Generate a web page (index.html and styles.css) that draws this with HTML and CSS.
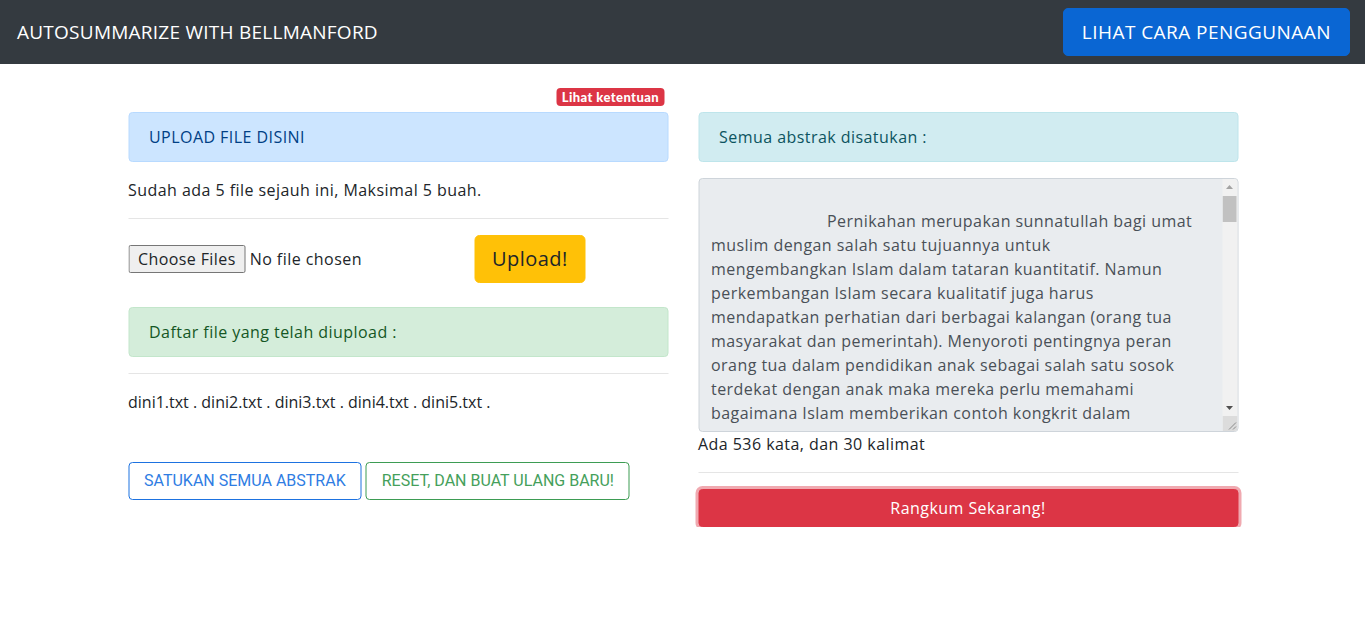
FILE: index.html
```html
<!DOCTYPE html>
<html lang="id">
<head>
<meta charset="utf-8">
<title>Autosummarize with Bellmanford</title>
<link rel="stylesheet" href="styles.css">
</head>
<body>
<nav class="navbar">
  <span class="brand">AUTOSUMMARIZE WITH BELLMANFORD</span>
  <button class="btn-guide" type="button">LIHAT CARA PENGGUNAAN</button>
</nav>

<main class="container">
  <section class="col">
    <div class="badge-row"><span class="badge">Lihat ketentuan</span></div>
    <div class="alert alert-primary">UPLOAD FILE DISINI</div>
    <p class="text">Sudah ada 5 file sejauh ini, Maksimal 5 buah.</p>
    <hr class="rule">
    <form class="upload-row">
      <input class="file-input" type="file" multiple>
      <button class="btn-upload" type="button">Upload!</button>
    </form>
    <div class="alert alert-success spaced">Daftar file yang telah diupload :</div>
    <hr class="rule">
    <p class="text files">dini1.txt . dini2.txt . dini3.txt . dini4.txt . dini5.txt .</p>
    <div class="actions">
      <button class="btn-outline btn-outline-primary" type="button">SATUKAN SEMUA ABSTRAK</button>
      <button class="btn-outline btn-outline-success" type="button">RESET, DAN BUAT ULANG BARU!</button>
    </div>
  </section>

  <section class="col col-right">
    <div class="alert alert-info">Semua abstrak disatukan :</div>
    <div class="textarea-wrap">
    <textarea class="abstract" readonly>

	Pernikahan merupakan sunnatullah bagi umat
muslim dengan salah satu tujuannya untuk
mengembangkan Islam dalam tataran kuantitatif. Namun
perkembangan Islam secara kualitatif juga harus
mendapatkan perhatian dari berbagai kalangan (orang tua
masyarakat dan pemerintah). Menyoroti pentingnya peran
orang tua dalam pendidikan anak sebagai salah satu sosok
terdekat dengan anak maka mereka perlu memahami
bagaimana Islam memberikan contoh kongkrit dalam
pendidikan anak melalui kisah-kisah dalam Al-Qur'an.
Penelitian ini bertujuan untuk mengetahui nilai-nilai
pendidikan anak yang terkandung dalam kisah Luqman
dan relevansinya dengan pendidikan anak pada masa
sekarang. Jenis penelitian ini adalah penelitian
kepustakaan (library research) dengan pendekatan
kualitatif. Teknik pengumpulan data dilakukan dengan
dokumentasi, sedangkan analisis data menggunakan
metode analisis isi (content analysis). Hasil
penelitian menunjukkan bahwa nilai-nilai pendidikan
anak meliputi pendidikan akidah, pendidikan ibadah,
pendidikan akhlak, dan pendidikan sosial
kemasyarakatan. Nilai-nilai tersebut masih sangat
relevan untuk diterapkan dalam keluarga muslim saat
ini. Pendidikan merupakan usaha sadar dan terencana
untuk mewujudkan suasana belajar dan proses
pembelajaran agar peserta didik secara aktif
mengembangkan potensi dirinya. Guru sebagai pendidik
profesional memiliki tugas utama mendidik, mengajar,
membimbing, mengarahkan, melatih, menilai, dan
mengevaluasi peserta didik.</textarea>
      <div class="fake-scroll" aria-hidden="true">
        <span class="sb-btn"><svg width="15" height="15" viewBox="0 0 15 15"><path d="M3.5 10 L7 6 L10.5 10 Z" fill="#a3a3a3"/></svg></span>
        <span class="sb-track"><span class="sb-thumb"></span></span>
        <span class="sb-btn"><svg width="15" height="15" viewBox="0 0 15 15"><path d="M3.5 5 L7 9 L10.5 5 Z" fill="#505050"/></svg></span>
        <span class="sb-corner"><svg width="15" height="15" viewBox="0 0 15 15"><path d="M13.5 6.5 L6.5 13.5 M13.5 10.5 L10.5 13.5" stroke="#8a8a8a" stroke-width="1"/></svg></span>
      </div>
    </div>
    <p class="count">Ada 536 kata, dan 30 kalimat</p>
    <hr class="rule">
    <button class="btn-danger" type="button">Rangkum Sekarang!</button>
  </section>
</main>
</body>
</html>
```

FILE: styles.css
```css
* {
  box-sizing: border-box;
}

html, body {
  margin: 0;
  background: #fff;
}

body {
  font-family: "Open Sans", "Noto Sans", sans-serif;
  font-size: 16px;
  line-height: 24px;
  letter-spacing: 0.45px;
  color: #212529;
}

.navbar {
  height: 64px;
  background: #343a40;
  display: flex;
  align-items: center;
  justify-content: space-between;
  padding: 0 15px 0 17px;
}

.brand {
  color: #fff;
  font-size: 19px;
  line-height: 30px;
  letter-spacing: 0.25px;
}

.btn-guide {
  font-family: inherit;
  letter-spacing: inherit;
  font-size: 19px;
  line-height: 30px;
  color: #fff;
  background: #0a66d3;
  border: 1px solid #0a66d3;
  border-radius: 5px;
  padding: 8px 18px;
  height: 48px;
}

.container {
  width: 1110px;
  margin: 24px auto 0;
  display: grid;
  grid-template-columns: 540px 540px;
  column-gap: 30px;
  transform: translateX(0.5px);
}

.col-right {
  padding-top: 24px;
}

.badge-row {
  height: 24px;
  display: flex;
  justify-content: flex-end;
  align-items: flex-start;
  padding-right: 4px;
}

.badge {
  display: inline-block;
  background: #dc3545;
  color: #fff;
  font-family: "Lato", "Open Sans", sans-serif;
  font-weight: 900;
  font-size: 13px;
  line-height: 18px;
  height: 18px;
  letter-spacing: 0.4px;
  padding: 0 5px;
  border-radius: 4px;
}

.alert {
  border: 1px solid transparent;
  border-radius: 4px;
  padding: 12px 20px;
  margin-bottom: 16px;
}

.alert.spaced {
  margin-top: 24px;
}

.alert-primary {
  background: #cce5ff;
  border-color: #b8daff;
  color: #004085;
}

.alert-success {
  background: #d4edda;
  border-color: #c3e6cb;
  color: #155724;
}

.alert-info {
  background: #d1ecf1;
  border-color: #bee5eb;
  color: #0c5460;
}

.text {
  margin: 0 0 16px;
}

.files {
  letter-spacing: 0;
}

.rule {
  margin: 16px 0;
  border: 0;
  border-top: 1px solid rgba(0, 0, 0, 0.1);
  height: 0;
}

.upload-row {
  display: flex;
  align-items: center;
  margin: 0;
}

.file-input {
  font-family: inherit;
  font-size: 16px;
  line-height: 24px;
  letter-spacing: inherit;
  width: 346px;
  color: #212529;
}

.file-input::file-selector-button {
  font: inherit;
  letter-spacing: 0.4px;
  color: #212529;
  height: 28px;
  padding: 0 9px;
  margin-right: 4px;
  background: #efefef;
  border: 1px solid #767676;
  border-radius: 2px;
}

.btn-upload {
  font-family: inherit;
  letter-spacing: inherit;
  font-size: 20px;
  line-height: 30px;
  height: 48px;
  padding: 8px 17px;
  color: #212529;
  background: #ffc107;
  border: 1px solid #ffc107;
  border-radius: 5px;
}

.actions {
  margin-top: 48px;
  display: flex;
  gap: 4px;
}

.btn-outline {
  font-family: "Roboto", sans-serif;
  font-size: 16px;
  line-height: 24px;
  letter-spacing: 0;
  height: 38px;
  padding: 6px 15px;
  background: #fff;
  border-radius: 4px;
  border: 1px solid;
}

.btn-outline-primary {
  color: #2f7de3;
  border-color: #1d72e0;
}

.btn-outline-success {
  color: #45a05b;
  border-color: #3d9c53;
}

.textarea-wrap {
  position: relative;
}

.abstract {
  display: block;
  width: 100%;
  height: 254px;
  margin: 0;
  padding: 6px 27px 0 12px;
  font-family: inherit;
  font-size: 16px;
  line-height: 24px;
  letter-spacing: inherit;
  color: #495057;
  background: #e9ecef;
  border: 1px solid #ced4da;
  border-radius: 4px;
  tab-size: 116px;
  resize: vertical;
  overflow: hidden;
}

.fake-scroll {
  position: absolute;
  top: 1px;
  right: 1px;
  bottom: 1px;
  width: 15px;
  display: flex;
  flex-direction: column;
  background: #f1f1f1;
  border-radius: 0 3px 3px 0;
  overflow: hidden;
  pointer-events: none;
}

.sb-btn,
.sb-corner {
  display: block;
  flex: 0 0 15px;
  height: 15px;
}

.sb-btn svg,
.sb-corner svg {
  display: block;
}

.sb-track {
  flex: 1 1 auto;
  display: block;
  padding-top: 2px;
}

.sb-thumb {
  display: block;
  height: 26px;
  margin: 0 1px 0 0;
  background: #c1c1c1;
}

.sb-corner {
  background: #dcdcdc;
}

.count {
  margin: 0 0 16px;
}

.btn-danger {
  display: block;
  width: 100%;
  height: 38px;
  font-family: inherit;
  font-size: 16px;
  line-height: 24px;
  letter-spacing: inherit;
  color: #fff;
  background: #dc3545;
  border: 1px solid #dc3545;
  border-radius: 4px;
  box-shadow: 0 0 0 3px rgba(225, 83, 97, 0.5);
}
```
